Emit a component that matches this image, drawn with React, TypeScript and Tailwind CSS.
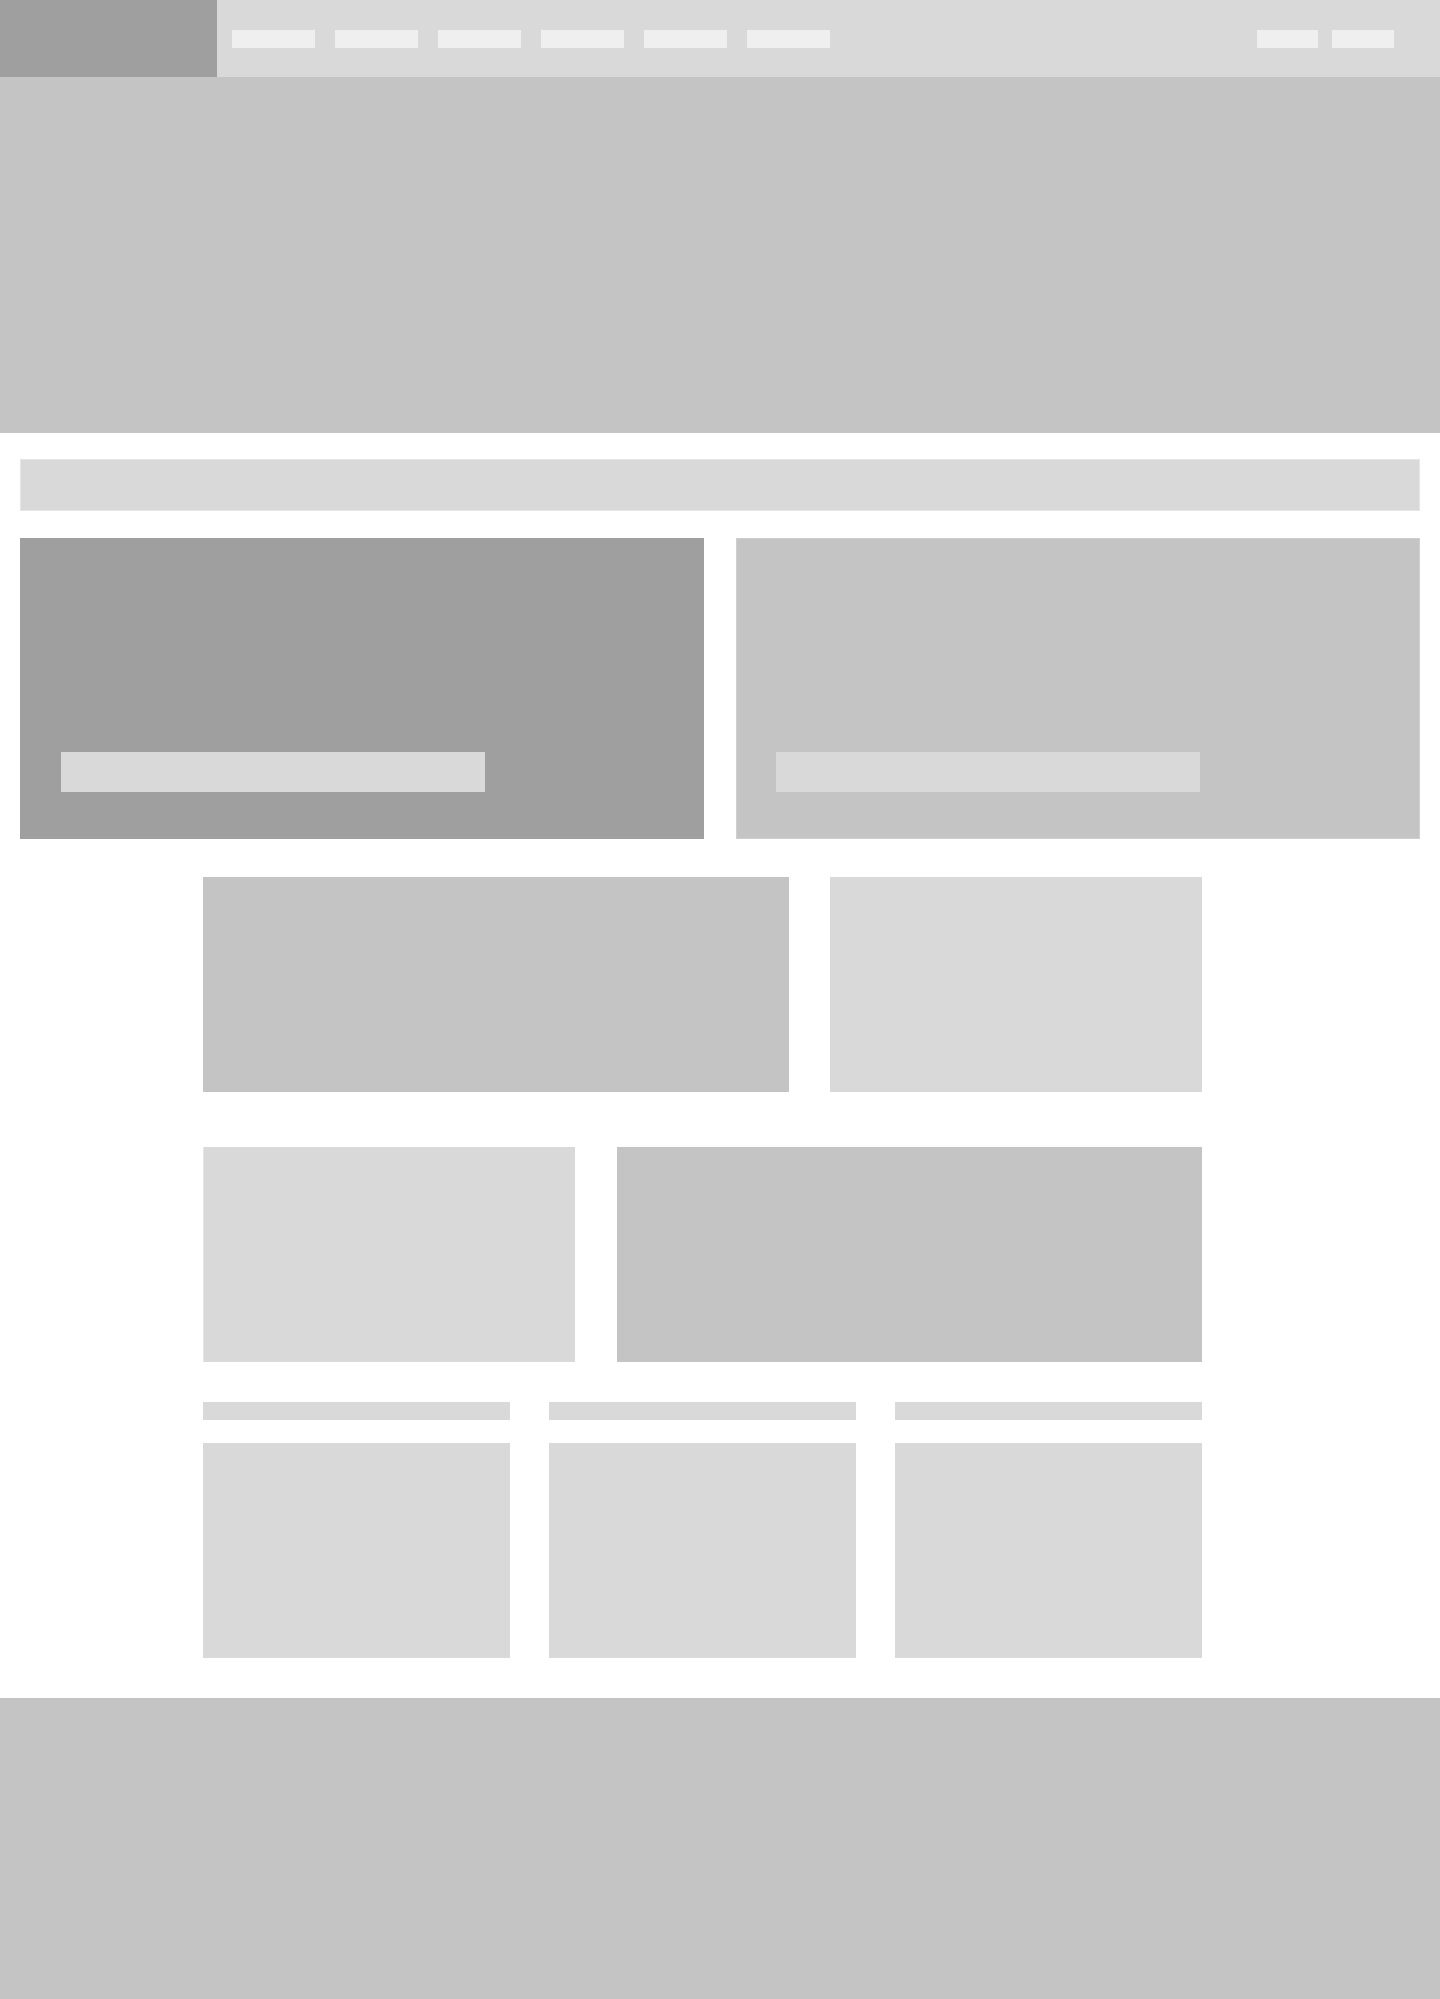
const navItems = [1, 2, 3, 4, 5, 6];

export default function App() {
  return (
    <div className="min-h-[1999px] w-[1440px] bg-white">
      <header className="flex h-[77px] bg-[#d9d9d9]">
        <div className="w-[217px] bg-[#9f9f9f]" />
        <nav className="flex flex-1 items-center justify-between pl-[15px] pr-[46px]">
          <ul className="flex gap-[20px]">
            {navItems.map((i) => (
              <li key={i} className="h-[18px] w-[83px] bg-[#efefef]" />
            ))}
          </ul>
          <div className="flex gap-[14px]">
            <span className="h-[18px] w-[61px] bg-[#efefef]" />
            <span className="h-[18px] w-[62px] bg-[#efefef]" />
          </div>
        </nav>
      </header>

      <section className="h-[356px] bg-[#c4c4c4]" />

      <main className="px-[20px]">
        <div className="mt-[26px] h-[52px] border border-[#e6e6e6] bg-[#d9d9d9]" />

        <div className="mt-[27px] grid h-[301px] grid-cols-2 gap-[32px]">
          <div className="flex flex-col justify-end bg-[#9f9f9f] px-[41px] pb-[47px]">
            <div className="h-[40px] w-[424px] bg-[#d9d9d9]" />
          </div>
          <div className="flex flex-col justify-end border border-[#cfcfcf] bg-[#c4c4c4] px-[39px] pb-[46px]">
            <div className="h-[40px] w-[424px] bg-[#d9d9d9]" />
          </div>
        </div>
      </main>

      <section className="pl-[203px]">
        <div className="mt-[38px] flex h-[215px] w-[999px] gap-[41px]">
          <div className="w-[586px] bg-[#c4c4c4]" />
          <div className="flex-1 bg-[#d9d9d9]" />
        </div>

        <div className="mt-[55px] flex h-[215px] w-[999px] gap-[42px]">
          <div className="w-[372px] border-l border-[#e6e6e6] bg-[#d9d9d9]" />
          <div className="flex-1 bg-[#c4c4c4]" />
        </div>

        <div className="mt-[40px] grid w-[999px] grid-cols-3 gap-[39px]">
          {[1, 2, 3].map((i) => (
            <div key={i} className="flex flex-col">
              <div className="h-[18px] bg-[#d9d9d9]" />
              <div className="mt-[23px] h-[215px] bg-[#d9d9d9]" />
            </div>
          ))}
        </div>
      </section>

      <footer className="mt-[40px] h-[301px] bg-[#c4c4c4]" />
    </div>
  );
}
